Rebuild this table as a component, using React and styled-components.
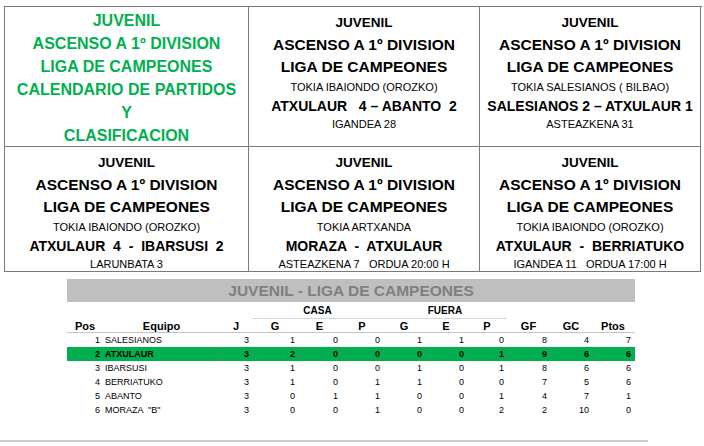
import React from 'react';
import styled, { createGlobalStyle } from 'styled-components';

const GlobalStyle = createGlobalStyle`
    body {
        margin: 0;
        background: #ffffff;
        font-family: "Liberation Sans", Arial, sans-serif;
    }
`

const Page = styled.div`
    width: 704px;
    height: 446px;
    padding: 6px 0 0 4px;
    box-sizing: border-box;
    overflow: hidden;
`

const Poster = styled.div`
    display: grid;
    grid-template-columns: 244px 231px 221px;
    grid-template-rows: 140px 125px;
    width: 697px;
    border-top: 1px solid #7a7a7a;
    border-left: 1px solid #7a7a7a;
    box-sizing: content-box;
`

const Cell = styled.div`
    border-right: 1px solid #7a7a7a;
    border-bottom: 1px solid #7a7a7a;
    padding-top: ${p => p.$top || 5}px;
    text-align: center;
    white-space: pre;
    color: ${p => p.$green ? '#00b050' : '#000'};
`

const Line = styled.div`
    font-size: ${p => p.$size}px;
    line-height: ${p => p.$lh}px;
    font-weight: ${p => p.$bold ? 700 : 400};
`

const Title = ({ children }) => <Line $size={13.5} $lh={22} $bold>{children}</Line>
const Big = ({ children }) => <Line $size={15.5} $lh={22} $bold>{children}</Line>
const Small = ({ children, lh = 19 }) => <Line $size={11} $lh={lh}>{children}</Line>
const Score = ({ children }) => <Line $size={14} $lh={19} $bold>{children}</Line>

const Match = ({ place, score, when }) => (
    <Cell>
        <Title>JUVENIL</Title>
        <Big>ASCENSO A 1º DIVISION</Big>
        <Big>LIGA DE CAMPEONES</Big>
        <Small>{place}</Small>
        <Score>{score}</Score>
        <Small lh={16}>{when}</Small>
    </Cell>
)

const Standings = styled.div`
    margin: 7px 0 0 63px;
    width: 568px;
`

const Banner = styled.div`
    height: 23px;
    background: #bfbfbf;
    color: #7f7f7f;
    font-size: 15.5px;
    font-weight: 700;
    line-height: 23px;
    text-align: center;
`

const Row = styled.div`
    display: grid;
    grid-template-columns: 36px 117px 32px 46px 43px 42px 42px 42px 40px 43px 42px 42px;
    height: ${p => p.$h || 14}px;
    align-items: center;
    background: ${p => p.$hl ? '#00b050' : 'transparent'};
    font-weight: ${p => p.$hl ? 700 : 400};
    border-bottom: ${p => p.$rule ? '1px solid #c4c4c4' : 'none'};
    box-sizing: border-box;
`

const Group = styled.div`
    grid-column: ${p => p.$span};
    align-self: stretch;
    display: flex;
    align-items: center;
    justify-content: center;
    font-size: 10px;
    font-weight: 700;
    border-bottom: 1px solid #d6d6d6;
`

const Head = styled.div`
    font-size: 11px;
    font-weight: 700;
    text-align: center;
    line-height: 14px;
`

const Num = styled.div`
    align-self: stretch;
    font-size: 9px;
    line-height: 14px;
    text-align: right;
    padding-right: 3px;
    border-left: ${p => p.$hl ? '1px solid #2e9a56' : 'none'};
`

const Name = styled.div`
    font-size: 9px;
    line-height: 14px;
    padding-left: 2px;
    white-space: pre;
`

const BottomRule = styled.div`
    margin: 23px 0 0 -4px;
    width: 648px;
    height: 2px;
    background: #cdcdcd;
`

const teams = [
    [1, 'SALESIANOS', 3, 1, 0, 0, 1, 1, 0, 8, 4, 7],
    [2, 'ATXULAUR', 3, 2, 0, 0, 0, 0, 1, 9, 6, 6],
    [3, 'IBARSUSI', 3, 1, 0, 0, 1, 0, 1, 8, 6, 6],
    [4, 'BERRIATUKO', 3, 1, 0, 1, 1, 0, 0, 7, 5, 6],
    [5, 'ABANTO', 3, 0, 1, 1, 0, 0, 1, 4, 7, 1],
    [6, 'MORAZA  "B"', 3, 0, 0, 1, 0, 0, 2, 2, 10, 0],
]

const heads = ['Pos', 'Equipo', 'J', 'G', 'E', 'P', 'G', 'E', 'P', 'GF', 'GC', 'Ptos']

const App = () => {
    return <Page>
        <GlobalStyle />
        <Poster>
            <Cell $green $top={2}>
                <Line $size={16} $lh={23} $bold>JUVENIL</Line>
                <Line $size={16} $lh={23} $bold>ASCENSO A 1º DIVISION</Line>
                <Line $size={16} $lh={23} $bold>LIGA DE CAMPEONES</Line>
                <Line $size={16} $lh={23} $bold>CALENDARIO DE PARTIDOS</Line>
                <Line $size={16} $lh={23} $bold>Y</Line>
                <Line $size={16} $lh={23} $bold>CLASIFICACION</Line>
            </Cell>
            <Match place="TOKIA IBAIONDO (OROZKO)" score="ATXULAUR   4 – ABANTO  2" when="IGANDEA 28" />
            <Match place="TOKIA SALESIANOS ( BILBAO)" score="SALESIANOS 2 – ATXULAUR 1" when="ASTEAZKENA 31" />
            <Match place="TOKIA IBAIONDO (OROZKO)" score="ATXULAUR  4  -  IBARSUSI  2" when="LARUNBATA 3" />
            <Match place="TOKIA ARTXANDA" score="MORAZA  -  ATXULAUR" when="ASTEAZKENA 7   ORDUA 20:00 H" />
            <Match place="TOKIA IBAIONDO (OROZKO)" score="ATXULAUR  -  BERRIATUKO" when="IGANDEA 11   ORDUA 17:00 H" />
        </Poster>
        <Standings>
            <Banner>JUVENIL - LIGA DE CAMPEONES</Banner>
            <Row $h={17}>
                <Group $span="4 / 7">CASA</Group>
                <Group $span="7 / 10">FUERA</Group>
            </Row>
            <Row $rule>
                {heads.map((h, i) => <Head key={i}>{h}</Head>)}
            </Row>
            {teams.map(t => {
                const hl = t[0] === 2
                return <Row key={t[0]} $hl={hl}>
                    <Num>{t[0]}</Num>
                    <Name>{t[1]}</Name>
                    {t.slice(2).map((v, i) => <Num key={i} $hl={hl}>{v}</Num>)}
                </Row>
            })}
        </Standings>
        <BottomRule />
    </Page>
}

export default App;
